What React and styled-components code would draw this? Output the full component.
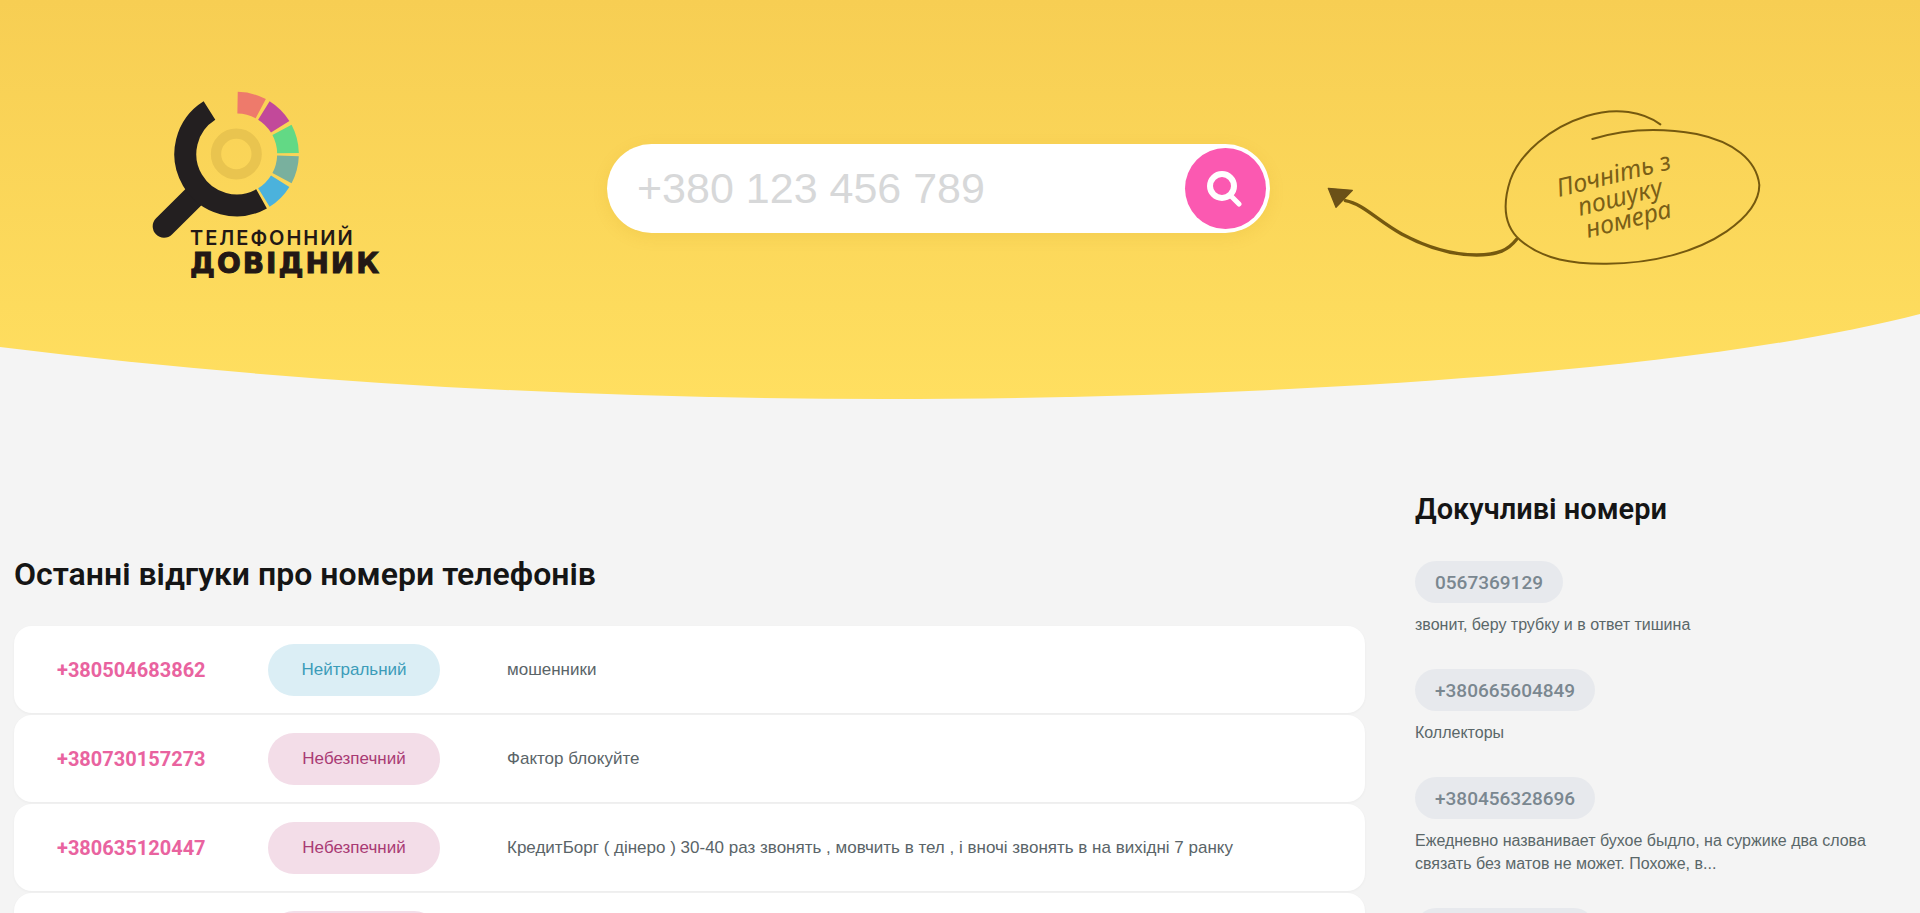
import React from "react";
import styled, { createGlobalStyle } from "styled-components";

const GlobalStyle = createGlobalStyle`
  * { box-sizing: border-box; }
  body {
    margin: 0;
    background: #f4f4f4;
    color: #151515;
    font-family: "Liberation Sans", Arial, sans-serif;
  }
`;

const Page = styled.div`
  min-height: 100vh;
  overflow: hidden;
`;

const Header = styled.header`
  position: relative;
  padding: 90px 158px 112px 152px;
`;

const Wave = styled.svg`
  position: absolute;
  inset: 0;
  width: 100%;
  height: 100%;
`;

const HeaderRow = styled.div`
  position: relative;
  display: grid;
  grid-template-columns: 455px minmax(0, 1fr) 432px;
  align-items: center;
`;

const LogoLink = styled.a`
  display: block;
  width: 228px;

  svg {
    display: block;
  }
`;

const LogoText = styled.text`
  fill: #231815;
  stroke: #231815;
  stroke-width: ${(p) => (p.$heavy ? 1 : 0)}px;
  font-family: ${(p) => (p.$heavy ? '"DejaVu Sans"' : "Inter")}, "Liberation Sans", sans-serif;
  font-size: ${(p) => (p.$heavy ? 28 : 20)}px;
  font-weight: ${(p) => (p.$heavy ? 700 : 600)};
  letter-spacing: 2px;
`;

const SearchForm = styled.form`
  display: flex;
  align-items: center;
  height: 89px;
  margin-right: 60px;
  padding: 4px;
  border-radius: 45px;
  background: #fff;
  box-shadow: 0 4px 16px rgba(190, 140, 20, 0.12);
`;

const SearchInput = styled.input`
  flex: 1;
  min-width: 0;
  height: 100%;
  padding: 0 0 0 26px;
  border: 0;
  outline: 0;
  background: transparent;
  color: #555;
  font-family: "Liberation Sans", Arial, sans-serif;
  font-size: 43px;

  &::placeholder {
    color: #d7d8d9;
    opacity: 1;
  }
`;

const SearchButton = styled.button`
  display: grid;
  place-items: center;
  flex: none;
  width: 81px;
  height: 81px;
  padding: 0;
  border: 0;
  border-radius: 50%;
  background: #fb59b1;
  cursor: pointer;
`;

const Doodle = styled.svg`
  display: block;
  overflow: visible;
`;

const NoteText = styled.text`
  fill: #7a5f17;
  font-family: "Noto Sans", "Open Sans", sans-serif;
  font-size: 25px;
  font-style: italic;
  font-weight: 400;
`;

const Content = styled.main`
  display: grid;
  grid-template-columns: minmax(0, 1351fr) minmax(0, 471fr);
  column-gap: 50px;
  align-items: start;
  padding: 0 34px 0 14px;
`;

const Reviews = styled.section`
  padding-top: 155px;
`;

const Sidebar = styled.aside`
  padding-top: 90px;
`;

const Title = styled.h2`
  margin: 0 0 32px;
  font-family: Roboto, sans-serif;
  font-size: ${(p) => (p.$small ? 29 : 32)}px;
  font-weight: 600;
  line-height: 40px;
`;

const ReviewList = styled.ul`
  display: grid;
  gap: 2px;
  margin: 0;
  padding: 0;
  list-style: none;
`;

const ReviewRow = styled.li`
  display: grid;
  grid-template-columns: 211px 172px minmax(0, 1fr);
  align-items: center;
  min-height: 87px;
  padding: 17px 43px;
  border-radius: 18px;
  background: #fff;
  box-shadow: 0 1px 3px rgba(0, 0, 0, 0.04);
`;

const Phone = styled.a`
  color: #e9639f;
  font-family: Roboto, sans-serif;
  font-size: 20px;
  font-weight: 700;
  text-decoration: none;
`;

const Badge = styled.span`
  display: grid;
  place-items: center;
  height: 52px;
  border-radius: 26px;
  background: ${(p) => (p.$danger ? "#f3dde8" : "#dbeef5")};
  color: ${(p) => (p.$danger ? "#a93a74" : "#3b9cb9")};
  font-size: 17px;
`;

const Comment = styled.p`
  margin: 0 0 0 67px;
  color: #5a6468;
  font-size: 17px;
  line-height: 24px;
`;

const Nuisance = styled.article`
  margin-bottom: 33px;
`;

const NumberPill = styled.a`
  display: inline-flex;
  align-items: center;
  height: 42px;
  padding: 0 20px;
  border-radius: 21px;
  background: #e7e9ed;
  color: #7a8790;
  font-family: Roboto, sans-serif;
  font-size: 19px;
  font-weight: 500;
  text-decoration: none;
  vertical-align: top;
`;

const NuisanceText = styled.p`
  margin: 10px 0 0;
  color: #5a6769;
  font-size: 16px;
  line-height: 23px;
`;

const reviews = [
  { phone: "+380504683862", tag: "Нейтральний", danger: false, text: "мошенники" },
  { phone: "+380730157273", tag: "Небезпечний", danger: true, text: "Фактор блокуйте" },
  {
    phone: "+380635120447",
    tag: "Небезпечний",
    danger: true,
    text: "КредитБорг ( дінеро ) 30-40 раз звонять , мовчить в тел , і вночі звонять в на вихідні 7 ранку",
  },
  { phone: "", tag: "", danger: true, text: "" },
];

const nuisances = [
  { phone: "0567369129", text: "звонит, беру трубку и в ответ тишина" },
  { phone: "+380665604849", text: "Коллекторы" },
  {
    phone: "+380456328696",
    text: "Ежедневно названивает бухое быдло, на суржике два слова связать без матов не может. Похоже, в...",
  },
  { phone: "+380000000000", text: "" },
];

// Arc of the lens ring; angles are degrees clockwise from the top.
function ringArc(from, to) {
  const point = (deg) => {
    const a = (deg * Math.PI) / 180;
    return `${290 + 154 * Math.sin(a)} ${222 - 154 * Math.cos(a)}`;
  };
  return `M${point(from)}A154 154 0 ${to - from > 180 ? 1 : 0} 1 ${point(to)}`;
}

const ringSegments = [
  [1, 28, "#ee7a6b"],
  [32, 58, "#c2499a"],
  [62, 89, "#62d985"],
  [92, 118, "#79b09e"],
  [122, 148, "#4bb2dc"],
];

function Logo() {
  return (
    <LogoLink href="#" aria-label="Телефонний довідник">
      <svg width="228" height="197" viewBox="0 0 228 197">
        <g transform="translate(-12 -10) scale(.33333)" fill="none">
          <circle cx="289" cy="222" r="61" stroke="#e9c44f" strokeWidth="31" />
          <path d="M165 347L72 439" stroke="#231f20" strokeWidth="68" strokeLinecap="round" />
          <path d={ringArc(151, 328)} stroke="#231f20" strokeWidth="66" />
          {ringSegments.map(([from, to, color]) => (
            <path key={color} d={ringArc(from, to)} stroke={color} strokeWidth="65" />
          ))}
        </g>
        <LogoText x="38" y="155">ТЕЛЕФОННИЙ</LogoText>
        <LogoText x="38" y="183" $heavy>ДОВІДНИК</LogoText>
      </svg>
    </LogoLink>
  );
}

function StartHint() {
  return (
    <Doodle width="432" height="161" viewBox="0 0 432 161">
      <g transform="translate(-10 -8) scale(.33333)" fill="none" stroke="#75590f" strokeLinecap="round">
        <path d="M25 265L97 271L48 322Z" fill="#6b5118" stroke="#6b5118" strokeWidth="4" strokeLinejoin="round" />
        <path d="M76 302C130 312 170 360 245 402C325 445 400 465 470 465C535 465 565 450 590 418" strokeWidth="10" />
        <path
          d="M1021 73C970 36 890 20 800 48C690 82 600 160 571 240C545 320 555 380 600 420C670 480 760 492 860 491C1000 491 1130 455 1220 394C1290 345 1318 300 1318 255C1310 180 1240 125 1130 102C1020 82 910 88 817 117"
          strokeWidth="6"
        />
      </g>
      <NoteText transform="translate(229 89) rotate(-14)">Почніть з</NoteText>
      <NoteText transform="translate(250 108) rotate(-14)">пошуку</NoteText>
      <NoteText transform="translate(258 130) rotate(-14)">номера</NoteText>
    </Doodle>
  );
}

export default function App() {
  return (
    <>
      <GlobalStyle />
      <Page>
        <Header>
          <Wave viewBox="0 0 1920 399" preserveAspectRatio="none" aria-hidden="true">
            <defs>
              <linearGradient id="sun" x1="0" y1="0" x2="0" y2="1">
                <stop offset="0" stopColor="#f7ce53" />
                <stop offset="1" stopColor="#ffdf60" />
              </linearGradient>
            </defs>
            <path d="M0 0H1920V314C1690 374 1250 399 885 399C580 399 280 382 0 347Z" fill="url(#sun)" />
          </Wave>
          <HeaderRow>
            <Logo />
            <SearchForm role="search" onSubmit={(e) => e.preventDefault()}>
              <SearchInput type="tel" aria-label="Номер телефону" placeholder="+380 123 456 789" />
              <SearchButton type="submit" aria-label="Пошук">
                <svg width="40" height="37" viewBox="0 0 40 37" fill="none" stroke="#fff" strokeLinecap="round">
                  <circle cx="16" cy="16" r="12" strokeWidth="6" />
                  <path d="M25 26L33 34" strokeWidth="5" />
                </svg>
              </SearchButton>
            </SearchForm>
            <StartHint />
          </HeaderRow>
        </Header>
        <Content>
          <Reviews>
            <Title>Останні відгуки про номери телефонів</Title>
            <ReviewList>
              {reviews.map((r, i) => (
                <ReviewRow key={i}>
                  <Phone href="#">{r.phone}</Phone>
                  <Badge $danger={r.danger}>{r.tag}</Badge>
                  <Comment>{r.text}</Comment>
                </ReviewRow>
              ))}
            </ReviewList>
          </Reviews>
          <Sidebar>
            <Title $small>Докучливі номери</Title>
            {nuisances.map((n) => (
              <Nuisance key={n.phone}>
                <NumberPill href="#">{n.phone}</NumberPill>
                <NuisanceText>{n.text}</NuisanceText>
              </Nuisance>
            ))}
          </Sidebar>
        </Content>
      </Page>
    </>
  );
}
